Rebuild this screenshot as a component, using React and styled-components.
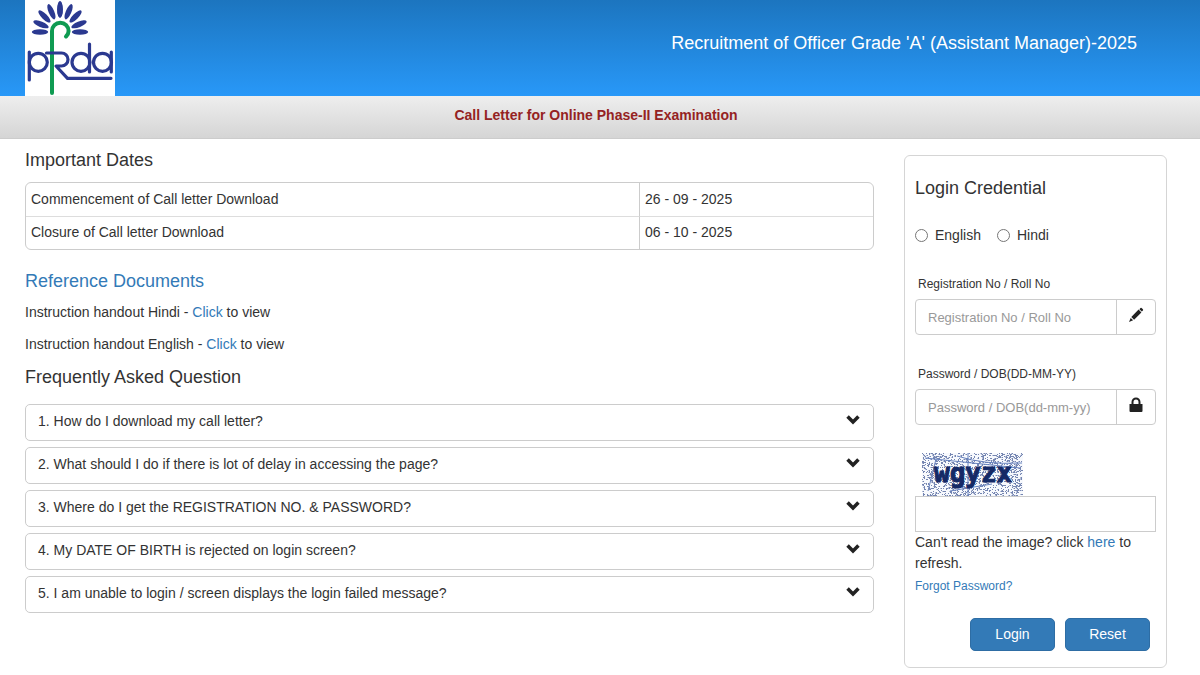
import React, { useState } from 'react'
import styled, { createGlobalStyle } from 'styled-components'

const GlobalStyle = createGlobalStyle`
  * {
    box-sizing: border-box;
  }

  body {
    margin: 0;
    background: #ffffff;
    color: #333333;
    font-family: "Liberation Sans", Arial, sans-serif;
    font-size: 14px;
    line-height: 22px;
  }

  button,
  input {
    font-family: inherit;
  }
`

const Header = styled.header`
  display: flex;
  justify-content: space-between;
  height: 96px;
  padding: 0 63px 0 25px;
  background: linear-gradient(to bottom, #1c75bf, #2898f8);
`

const HeaderTitle = styled.h1`
  margin: 0;
  padding-top: 31px;
  color: #ffffff;
  font-size: 18px;
  font-weight: normal;
  line-height: 24px;
`

const SubHeader = styled.div`
  height: 43px;
  padding: 8px 8px 0 0;
  border-bottom: 1px solid #cccccc;
  background: linear-gradient(to bottom, #eeeeee, #d5d5d5);
  color: #952222;
  font-weight: bold;
  text-align: center;
`

const Main = styled.main`
  display: grid;
  grid-template-columns: minmax(0, 1fr) 263px;
  align-items: start;
  gap: 30px;
  padding: 0 33px 7px 25px;

  @media screen and (max-width: 768px) {
    grid-template-columns: minmax(0, 1fr);
    padding: 0 25px 8px;
  }
`

const Content = styled.div`
  padding-top: 9px;
`

const Heading = styled.h2`
  margin: 0;
  color: ${(props) => (props.$blue ? '#337ab7' : '#333333')};
  font-size: 18px;
  font-weight: normal;
  line-height: 24px;
`

const Link = styled.a`
  color: #337ab7;
  font-size: ${(props) => (props.$small ? '12px' : '14px')};
  text-decoration: none;
`

const DatesTable = styled.table`
  width: 100%;
  margin: 10px 0 19px;
  border: 1px solid #cccccc;
  border-radius: 6px;
  border-collapse: separate;
  border-spacing: 0;
  table-layout: fixed;

  td {
    height: 33px;
    padding: 0 5px 2px;
  }

  td + td {
    width: 234px;
    border-left: 1px solid #cccccc;
  }

  tr + tr td {
    border-top: 1px solid #dddddd;
  }
`

const Handouts = styled.div`
  padding-bottom: 8px;
`

const Handout = styled.p`
  margin: 0;
  padding: 8px 0 2px;
`

const FaqList = styled.div`
  display: flex;
  flex-direction: column;
  gap: 6px;
  margin-top: 15px;
`

const FaqButton = styled.button`
  display: flex;
  align-items: flex-start;
  justify-content: space-between;
  width: 100%;
  height: 37px;
  padding: 5px 12px;
  border: 1px solid #cccccc;
  border-radius: 5px;
  background: #ffffff;
  color: #333333;
  font-size: 14px;
  line-height: 22px;
  text-align: left;
`

const ChevronIcon = styled.svg`
  width: 16px;
  height: 16px;
  margin-top: 2px;
  fill: #222222;
`

const LoginCard = styled.form`
  margin-top: 16px;
  padding: 20px 10px 16px;
  border: 1px solid #d5d5d5;
  border-radius: 6px;
`

const Languages = styled.div`
  display: flex;
  gap: 16px;
  padding: 24px 0 27px;
`

const RadioLabel = styled.label`
  display: flex;
  align-items: center;
  gap: 7px;
`

const Radio = styled.input`
  width: 13px;
  height: 13px;
  margin: 0;
`

const Field = styled.div`
  padding-bottom: 28px;
`

const FieldLabel = styled.label`
  display: block;
  padding: 0 3px 4px;
  font-size: 12px;
`

const InputGroup = styled.div`
  display: flex;
  height: 36px;
  border: 1px solid #cccccc;
  border-radius: 4px;
`

const Input = styled.input`
  flex: 1;
  min-width: 0;
  padding: 0 12px;
  border: 0;
  border-radius: 4px;
  background: transparent;
  color: #333333;
  font-size: 13px;

  &::placeholder {
    color: #999999;
  }
`

const Addon = styled.span`
  display: flex;
  align-items: center;
  justify-content: center;
  width: 39px;
  padding-bottom: 4px;
  border-left: 1px solid #cccccc;
`

const AddonIcon = styled.svg`
  width: 16px;
  height: 16px;
  fill: #222222;
`

const Captcha = styled.svg`
  display: block;
  width: 101px;
  height: 43px;
  margin-left: 7px;
`

const CaptchaInput = styled.input`
  display: block;
  width: 100%;
  height: 36px;
  padding: 0 12px;
  border: 1px solid #cccccc;
  font-size: 13px;
`

const Help = styled.p`
  margin: 0;
  line-height: 21px;
`

const Actions = styled.div`
  display: flex;
  justify-content: flex-end;
  gap: 10px;
  padding: 21px 6px 0 0;
`

const Button = styled.button`
  width: 85px;
  height: 33px;
  padding: 0 0 2px;
  border: 1px solid #2e6da4;
  border-radius: 5px;
  background: #337ab7;
  color: #ffffff;
  font-size: 14px;
`

const LogoBox = styled.svg`
  display: block;
  width: 90px;
  height: 96px;
  background: #ffffff;
`

const petals = [
  { angle: 0, distance: 22.5 },
  { angle: 23, distance: 22 },
  { angle: 45, distance: 22 },
  { angle: 68, distance: 20.5 },
  { angle: 90, distance: 20 },
]

function Logo() {
  return (
    <LogoBox viewBox="0 0 90 96" role="img" aria-label="PFRDA">
      <g fill="#2b3990">
        {petals.map(({ angle, distance }) => (
          <g key={angle}>
            <ellipse cx="35" cy={32 - distance} rx="2.8" ry="8.2" transform={`rotate(${angle} 35 32)`} />
            <ellipse cx="35" cy={32 - distance} rx="2.8" ry="8.2" transform={`rotate(${-angle} 35 32)`} />
          </g>
        ))}
      </g>
      <path d="M27 93V31A8.300 8.300 0 0 1 43.600 31Q43.600 34 41 36.500" fill="none" stroke="#0f9b52" strokeWidth="4" strokeLinecap="round" />
      <g fill="none" stroke="#2b3990" strokeWidth="3.200" strokeLinecap="round">
        <circle cx="13.300" cy="62.300" r="9" />
        <line x1="4.300" y1="52" x2="4.300" y2="80" />
        <path d="M21.500 53H36.500A6.500 6.500 0 0 1 36.500 66H31L42.500 78.300H86" strokeLinejoin="round" />
        <circle cx="56" cy="62.300" r="9" />
        <line x1="64.500" y1="44" x2="64.500" y2="72" />
        <circle cx="77.500" cy="62.300" r="9" />
        <line x1="86.300" y1="52" x2="86.300" y2="72" />
      </g>
    </LogoBox>
  )
}

function Chevron() {
  return (
    <ChevronIcon viewBox="0 0 16 16" aria-hidden="true">
      <path d="M1.300 5.800L3.800 3.300L8 7.400L12.200 3.300L14.700 5.800L8 12.500Z" />
    </ChevronIcon>
  )
}

function Pencil() {
  return (
    <AddonIcon viewBox="0 0 16 16" aria-hidden="true">
      <path d="M11.400 2.200L12.500 1.100Q13.200 .5 13.900 1.200L14.900 2.200Q15.500 2.900 14.900 3.600L13.800 4.600ZM10.600 2.600L13.400 5.400L6.100 12.700L3.300 9.900ZM2.700 10.900L5.100 13.300L1 15Z" />
    </AddonIcon>
  )
}

function Lock() {
  return (
    <AddonIcon viewBox="0 0 16 16" aria-hidden="true">
      <path d="M1.500 7H3.500V5A4.500 4.500 0 0 1 12.500 5V7H14.500V14Q14.500 15 13.500 15H2.500Q1.500 15 1.500 14ZM5.500 7H10.500V5A2.500 2.500 0 0 0 5.500 5Z" />
    </AddonIcon>
  )
}

// fixed seed so the speckles do not move between renders
function makeSpeckles(count) {
  let seed = 17
  const next = () => {
    seed = (seed * 16807) % 2147483647
    return seed / 2147483647
  }
  return Array.from({ length: count }, () => {
    const x = Math.floor(next() * 100)
    const y = Math.floor(next() * 43)
    return `M${x} ${y}h${next() > 0.6 ? 2 : 1}v1h-1z`
  }).join('')
}

const speckles = makeSpeckles(1350)

function CaptchaImage() {
  return (
    <Captcha viewBox="0 0 101 43" role="img" aria-label="Captcha">
      <rect width="101" height="43" fill="#f7f9fd" />
      <path d={speckles} fill="#3c5490" opacity="0.7" />
      <g fill="none" stroke="#6580bd" strokeWidth="1">
        <path d="M3 5L98 15M35 3Q62 12 100 10M6 38L14 6M46 0V43M28 38L70 31" />
      </g>
      <text x="12" y="29" fill="#142966" stroke="#142966" strokeWidth="1" fontFamily="DejaVu Sans Mono, monospace" fontSize="26" fontWeight="bold">
        wgyzx
      </text>
    </Captcha>
  )
}

const questions = [
  'How do I download my call letter?',
  'What should I do if there is lot of delay in accessing the page?',
  'Where do I get the REGISTRATION NO. & PASSWORD?',
  'My DATE OF BIRTH is rejected on login screen?',
  'I am unable to login / screen displays the login failed message?',
]

function Login() {
  const [language, setLanguage] = useState('')

  return (
    <LoginCard onSubmit={(e) => e.preventDefault()} onReset={() => setLanguage('')}>
      <Heading>Login Credential</Heading>
      <Languages>
        {['English', 'Hindi'].map((name) => (
          <RadioLabel key={name}>
            <Radio type="radio" name="language" checked={language === name} onChange={() => setLanguage(name)} />
            {name}
          </RadioLabel>
        ))}
      </Languages>
      <Field>
        <FieldLabel htmlFor="regno">Registration No / Roll No</FieldLabel>
        <InputGroup>
          <Input id="regno" type="text" placeholder="Registration No / Roll No" />
          <Addon><Pencil /></Addon>
        </InputGroup>
      </Field>
      <Field>
        <FieldLabel htmlFor="password">Password / DOB(DD-MM-YY)</FieldLabel>
        <InputGroup>
          <Input id="password" type="password" placeholder="Password / DOB(dd-mm-yy)" />
          <Addon><Lock /></Addon>
        </InputGroup>
      </Field>
      <CaptchaImage />
      <CaptchaInput type="text" aria-label="Captcha text" />
      <Help>
        Can't read the image? click <Link href="#refresh">here</Link> to refresh.
      </Help>
      <Link $small href="#forgot">Forgot Password?</Link>
      <Actions>
        <Button type="submit">Login</Button>
        <Button type="reset">Reset</Button>
      </Actions>
    </LoginCard>
  )
}

export default function App() {
  return (
    <>
      <GlobalStyle />
      <Header>
        <Logo />
        <HeaderTitle>Recruitment of Officer Grade 'A' (Assistant Manager)-2025</HeaderTitle>
      </Header>
      <SubHeader>Call Letter for Online Phase-II Examination</SubHeader>
      <Main>
        <Content>
          <Heading>Important Dates</Heading>
          <DatesTable>
            <tbody>
              <tr>
                <td>Commencement of Call letter Download</td>
                <td>26 - 09 - 2025</td>
              </tr>
              <tr>
                <td>Closure of Call letter Download</td>
                <td>06 - 10 - 2025</td>
              </tr>
            </tbody>
          </DatesTable>
          <Heading $blue>Reference Documents</Heading>
          <Handouts>
            <Handout>
              Instruction handout Hindi - <Link href="#hindi">Click</Link> to view
            </Handout>
            <Handout>
              Instruction handout English - <Link href="#english">Click</Link> to view
            </Handout>
          </Handouts>
          <Heading>Frequently Asked Question</Heading>
          <FaqList>
            {questions.map((question, i) => (
              <FaqButton key={question} type="button">
                {i + 1}. {question}
                <Chevron />
              </FaqButton>
            ))}
          </FaqList>
        </Content>
        <Login />
      </Main>
    </>
  )
}
